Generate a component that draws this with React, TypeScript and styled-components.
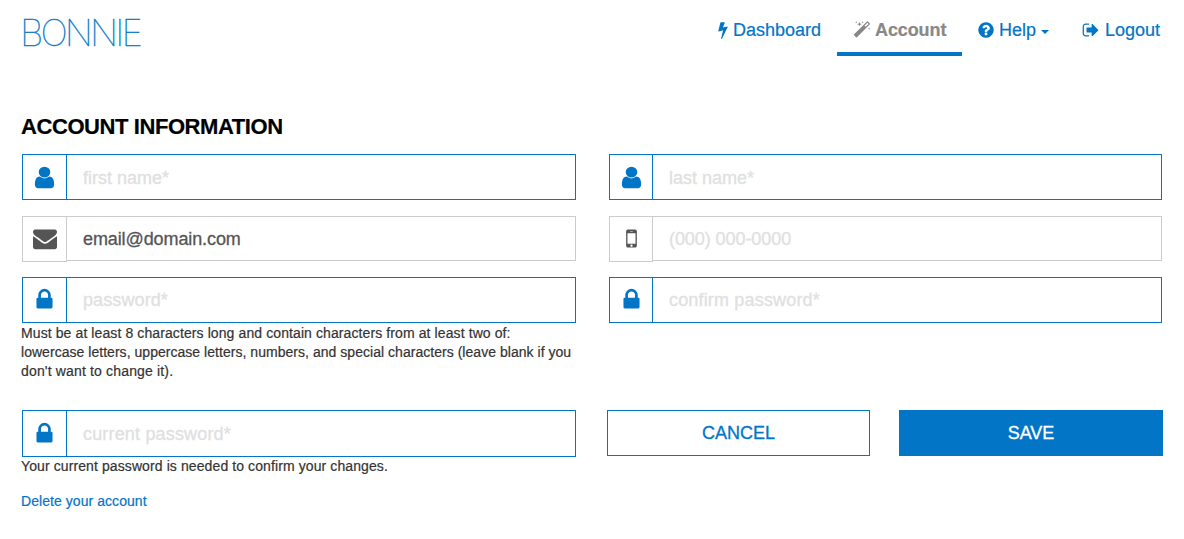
import React from "react";
import styled, { createGlobalStyle } from "styled-components";

const BLUE = "#0275c7";

const GlobalStyle = createGlobalStyle`
  * { box-sizing: border-box; }
  body {
    margin: 0;
    background: #fff;
    color: #333;
    font-family: "Liberation Sans", Arial, sans-serif;
    -webkit-text-stroke: 0.2px currentColor;
  }
`;

const icons = {
  user: "M1536 1399q0 109-62.5 187t-150.5 78h-854q-88 0-150.5-78t-62.5-187q0-85 8.5-160.5t31.5-152 58.5-131 94-89 134.5-34.5q131 128 313 128t313-128q76 0 134.5 34.5t94 89 58.5 131 31.5 152 8.5 160.5zm-256-887q0 159-112.5 271.5t-271.5 112.5-271.5-112.5-112.5-271.5 112.5-271.5 271.5-112.5 271.5 112.5 112.5 271.5z",
  envelope: "M1792 710v794q0 66-47 113t-113 47h-1472q-66 0-113-47t-47-113v-794q44 49 101 87 362 246 497 345 57 42 92.5 65.5t94.5 48 110 24.5h2q51 0 110-24.5t94.5-48 92.5-65.5q170-123 498-345 57-39 100-87zm0-294q0 79-49 151t-122 123q-376 261-468 325-10 7-42.5 31t-54 38.5-52 32.5-57.5 27-50 9h-2q-23 0-50-9t-57.5-27-52-32.5-54-38.5-42.5-31q-91-64-262-182.5t-205-142.5q-62-42-117-115.5t-55-136.5q0-78 41.5-130t118.5-52h1472q65 0 112.5 47t47.5 113z",
  lock: "M640 768h512v-192q0-106-75-181t-181-75-181 75-75 181v192zm832 96v576q0 40-28 68t-68 28h-960q-40 0-68-28t-28-68v-576q0-40 28-68t68-28h32v-192q0-184 132-316t316-132 316 132 132 316v192h32q40 0 68 28t28 68z",
  mobile: "M976 1408q0-33-23.5-56.5t-56.5-23.5-56.5 23.5-23.5 56.5 23.5 56.5 56.5 23.5 56.5-23.5 23.5-56.5zm208-160v-704q0-13-9.5-22.5t-22.5-9.5h-512q-13 0-22.5 9.5t-9.5 22.5v704q0 13 9.5 22.5t22.5 9.5h512q13 0 22.5-9.5t9.5-22.5zm-192-848q0-16-16-16h-160q-16 0-16 16t16 16h160q16 0 16-16zm288-16v1024q0 52-38 90t-90 38h-512q-52 0-90-38t-38-90v-1024q0-52 38-90t90-38h512q52 0 90 38t38 90z",
  bolt: "M1333 566q18 20 7 44l-540 1157q-13 25-42 25-4 0-14-2-17-5-25.5-19t-4.5-30l197-808-406 101q-4 1-12 1-18 0-31-11-18-15-13-39l201-825q4-14 16-23t28-9h328q19 0 32 12.5t13 29.5q0 8-5 18l-171 463 396-98q8-2 12-2 19 0 34 15z",
  question: "M1024 1376v-192q0-14-9-23t-23-9h-192q-14 0-23 9t-9 23v192q0 14 9 23t23 9h192q14 0 23-9t9-23zm256-672q0-88-55.5-163t-138.5-116-170-41q-243 0-371 213-15 24 8 42l132 100q7 6 19 6 16 0 25-12 53-68 86-92 34-24 86-24 48 0 85.5 26t37.5 59q0 38-20 61t-68 45q-63 28-115.5 86.5t-52.5 125.5v36q0 14 9 23t23 9h192q14 0 23-9t9-23q0-19 21.5-49.5t54.5-49.5q32-18 49-28.5t46-35 44.5-48 28-60.5 12.5-81zm384 192q0 209-103 385.5t-279.5 279.5-385.5 103-385.5-103-279.5-279.5-103-385.5 103-385.5 279.5-279.5 385.5-103 385.5 103 279.5 279.5 103 385.5z",
  signOut: "M704 1440q0 4 1 20t.5 26.5-3 23.5-10 19.5-20.5 6.5h-320q-119 0-203.5-84.5t-84.5-203.5v-704q0-119 84.5-203.5t203.5-84.5h320q13 0 22.5 9.5t9.5 22.5q0 4 1 20t.5 26.5-3 23.5-10 19.5-20.5 6.5h-320q-66 0-113 47t-47 113v704q0 66 47 113t113 47h312l11.5 1 11.5 3 8 5.5 7 9 2 13.5zm928-544q0 26-19 45l-544 544q-19 19-45 19t-45-19-19-45v-288h-448q-26 0-45-19t-19-45v-384q0-26 19-45t45-19h448v-288q0-26 19-45t45-19 45 19 19 45z",
  magic: "M1254 581l293-293-107-107-293 293zm447-293q0 27-18 45l-1286 1286q-18 18-45 18t-45-18l-198-198q-18-18-18-45t18-45l1286-1286q18-18 45-18t45 18l198 198q18 18 18 45zm-1351-190l98 30-98 30-30 98-30-98-98-30 98-30 30-98zm350 162l196 60-196 60-60 196-60-196-196-60 196-60 60-196zm930 478l98 30-98 30-30 98-30-98-98-30 98-30 30-98zm-640-640l98 30-98 30-30 98-30-98-98-30 98-30 30-98z",
};

type IconName = keyof typeof icons;

const Svg = styled.svg<{ $width: number; $height: number }>`
  display: block;
  flex: none;
  width: ${(p) => p.$width}px;
  height: ${(p) => p.$height}px;
  fill: currentColor;
`;

interface IconProps {
  name: IconName;
  width: number;
  height: number;
  box?: string;
}

const Icon = ({ name, width, height, box = "0 0 1792 1792" }: IconProps) => (
  <Svg $width={width} $height={height} viewBox={box} preserveAspectRatio="none" aria-hidden="true">
    <path d={icons[name]} />
  </Svg>
);

const Page = styled.div`
  width: 1184px;
  height: 539px;
  padding: 0 21px;
  overflow: hidden;
`;

const Header = styled.header`
  display: flex;
  justify-content: space-between;
  height: 56px;
`;

const Logo = styled.a`
  margin: 10px 0 0 -1px;
  font: 100 36.5px/46px Inter, sans-serif;
  letter-spacing: -2.9px;
  color: ${BLUE};
  -webkit-text-stroke: 0.35px currentColor;
`;

const Nav = styled.nav`
  display: flex;
`;

const NavItem = styled.a<{ $width: number; $active?: boolean; $indent?: number; $gap?: number }>`
  display: flex;
  align-items: center;
  gap: ${(p) => p.$gap ?? 5}px;
  width: ${(p) => p.$width}px;
  height: 56px;
  padding: 8px 0 0 ${(p) => p.$indent ?? 0}px;
  border-bottom: 4px solid ${(p) => (p.$active ? BLUE : "transparent")};
  font-size: 18px;
  line-height: 24px;
  letter-spacing: ${(p) => (p.$active ? -0.1 : 0)}px;
  white-space: nowrap;
  font-weight: ${(p) => (p.$active ? 700 : 400)};
  color: ${(p) => (p.$active ? "#888" : BLUE)};
`;

const Caret = styled.span`
  margin: 4px 0 0 1px;
  border: 4px solid transparent;
  border-top-color: currentColor;
  border-bottom: 0;
`;

const Title = styled.h1`
  margin: 57px 0 0;
  height: 41px;
  font-size: 22px;
  line-height: 28px;
  letter-spacing: -0.42px;
  color: #000;
`;

const Form = styled.form`
  display: grid;
  grid-template-columns: 554px 553px;
  column-gap: 33px;
  padding-left: 1px;
`;

const Cell = styled.div<{ $height: number }>`
  height: ${(p) => p.$height}px;
`;

const Group = styled.label<{ $muted?: boolean; $height: number }>`
  display: flex;
  height: ${(p) => p.$height}px;
  color: ${(p) => (p.$muted ? "#555" : BLUE)};
  --line: ${(p) => (p.$muted ? "#ccc" : BLUE)};
`;

const Addon = styled.span<{ $width: number; $lift: number }>`
  display: flex;
  align-items: center;
  justify-content: center;
  width: ${(p) => p.$width}px;
  padding-bottom: ${(p) => p.$lift}px;
  border: 1px solid var(--line);
`;

const Input = styled.input<{ $short?: boolean; $spacing: number; $drop: number }>`
  flex: 1;
  min-width: 0;
  height: ${(p) => (p.$short ? "45px" : "100%")};
  padding: ${(p) => p.$drop}px 16px 0;
  border: 1px solid var(--line);
  border-left: 0;
  border-radius: 0;
  outline: 0;
  background: #fff;
  color: #555;
  font: 18px "Liberation Sans", Arial, sans-serif;
  letter-spacing: ${(p) => p.$spacing}px;
  -webkit-text-stroke: 0.3px currentColor;
  &::placeholder { color: #e0e0e0; opacity: 1; }
`;

const Help = styled.p<{ $top?: number }>`
  margin: 0 0 0 -1px;
  padding-top: ${(p) => p.$top ?? 0}px;
  font-size: 14px;
  line-height: 19px;
  white-space: nowrap;
`;

const Line = styled.span<{ $spacing: number }>`
  display: block;
  letter-spacing: ${(p) => p.$spacing}px;
`;

const Actions = styled.div`
  display: flex;
  justify-content: space-between;
  margin: 0 -1px 0 -2px;
`;

const Button = styled.button<{ $primary?: boolean }>`
  width: ${(p) => (p.$primary ? 264 : 263)}px;
  height: 46px;
  padding: 0;
  border: 1px solid ${BLUE};
  background: ${(p) => (p.$primary ? BLUE : "#fff")};
  color: ${(p) => (p.$primary ? "#fff" : BLUE)};
  font: 18px "Liberation Sans", Arial, sans-serif;
  -webkit-text-stroke: 0.3px currentColor;
`;

const DeleteLink = styled.a`
  display: block;
  margin: 16px 0 0 -1px;
  font-size: 14px;
  line-height: 19px;
  letter-spacing: 0.06px;
  color: ${BLUE};
`;

interface FieldProps {
  icon: IconName;
  iconWidth?: number;
  iconHeight?: number;
  placeholder?: string;
  value?: string;
  muted?: boolean;
  height?: number;
  spacing?: number;
  drop?: number;
  addon?: number;
  lift?: number;
}

const Field = ({
  icon,
  iconWidth = 25,
  iconHeight = 25,
  placeholder,
  value,
  muted,
  height = 46,
  spacing = 0,
  drop = 1,
  addon = 45,
  lift = 1,
}: FieldProps) => (
  <Group $muted={muted} $height={height}>
    <Addon $width={addon} $lift={lift}>
      <Icon name={icon} width={iconWidth} height={iconHeight} />
    </Addon>
    <Input $short={muted} $spacing={spacing} $drop={drop} placeholder={placeholder} defaultValue={value} />
  </Group>
);

export default function App() {
  return (
    <Page>
      <GlobalStyle />
      <Header>
        <Logo>BONNIE</Logo>
        <Nav>
          <NavItem $width={120} $indent={1}>
            <Icon name="bolt" width={10} height={18} box="420 0 960 1792" />
            Dashboard
          </NavItem>
          <NavItem $width={125} $indent={16} $gap={4} $active>
            <Icon name="magic" width={18} height={18} />
            Account
          </NavItem>
          <NavItem $width={120} $indent={15} $gap={4}>
            <Icon name="question" width={18} height={18} />
            Help
            <Caret />
          </NavItem>
          <NavItem $width={81}>
            <Icon name="signOut" width={18} height={18} />
            Logout
          </NavItem>
        </Nav>
      </Header>
      <Title>ACCOUNT INFORMATION</Title>
      <Form>
        <Cell $height={62}>
          <Field icon="user" iconWidth={27} lift={0} placeholder="first name*" drop={3} />
        </Cell>
        <Cell $height={62}>
          <Field icon="user" iconWidth={27} lift={0} placeholder="last name*" drop={3} addon={44} />
        </Cell>
        <Cell $height={61}>
          <Field icon="envelope" iconWidth={24} value="email@domain.com" spacing={-0.1} muted />
        </Cell>
        <Cell $height={61}>
          <Field icon="mobile" placeholder="(000) 000-0000" spacing={-0.07} addon={44} muted />
        </Cell>
        <Cell $height={133}>
          <Field icon="lock" placeholder="password*" spacing={0.1} />
          <Help $top={1}>
            <Line $spacing={0.1}>
              Must be at least 8 characters long and contain characters from at least two of:
            </Line>
            <Line $spacing={0.035}>
              lowercase letters, uppercase letters, numbers, and special characters (leave blank if you
            </Line>
            <Line $spacing={0.16}>don't want to change it).</Line>
          </Help>
        </Cell>
        <Cell $height={133}>
          <Field icon="lock" placeholder="confirm password*" spacing={0.17} addon={44} />
        </Cell>
        <Cell $height={110}>
          <Field icon="lock" placeholder="current password*" height={47} spacing={0.17} />
          <Help>
            <Line $spacing={0.1}>Your current password is needed to confirm your changes.</Line>
          </Help>
          <DeleteLink>Delete your account</DeleteLink>
        </Cell>
        <Actions>
          <Button type="button">CANCEL</Button>
          <Button type="button" $primary>SAVE</Button>
        </Actions>
      </Form>
    </Page>
  );
}
